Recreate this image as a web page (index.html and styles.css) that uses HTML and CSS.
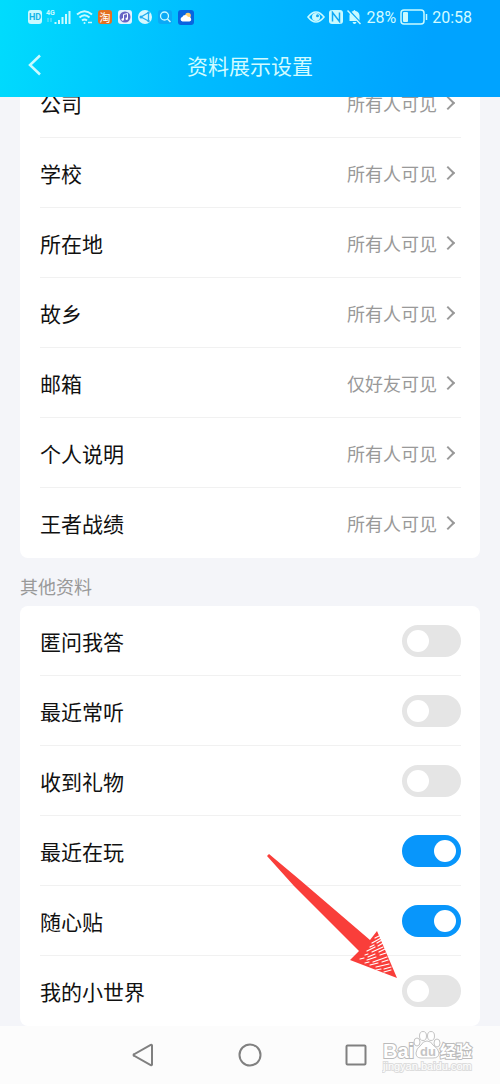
FILE: index.html
```html
<!DOCTYPE html>
<html lang="zh-CN">
<head>
    <meta charset="UTF-8">
    <meta name="viewport" content="width=device-width, initial-scale=1.0">
    <title>资料展示设置</title>
    <link rel="stylesheet" href="styles.css">
</head>
<body>
    <header class="header">
        <div class="status-bar">
            <div class="status-left">
                <span class="hd">HD</span>
                <svg class="signal" width="26" height="16" viewBox="0 0 26 16">
                    <text x="0" y="6" font-size="7" font-weight="700" fill="#c9faff">4G</text>
                    <path d="M2 9v4M5 9v4" stroke="#7fe3fb" stroke-width="1"/>
                    <path d="M9.500 13v2M13 11v4M16.500 8v7M20 5v10M23.500 2v13" stroke="#c9faff" stroke-width="2"/>
                </svg>
                <svg class="wifi" width="18" height="16" viewBox="0 0 18 16" fill="none" stroke="#c9faff" stroke-width="2">
                    <path d="M1 5.500Q8.500-1 16 5.500M3.500 8.500q5-4.500 10 0M6 11.500q2.500-2 5 0"/>
                    <circle cx="8.500" cy="14" r="1" fill="#c9faff" stroke="none"/>
                    <path d="M12 13.500h4" stroke-width="1.500"/>
                </svg>
                <span class="taobao">淘</span>
                <svg width="14" height="14" viewBox="0 0 14 14">
                    <rect width="14" height="14" rx="3" fill="#e2f2ff"/>
                    <circle cx="7" cy="7" r="5.500" fill="#6865c4"/>
                    <path d="M5.500 9.500V4.500L9.500 3.500v5" fill="none" stroke="#fff" stroke-width="1"/>
                    <circle cx="4.700" cy="9.500" r="1.200" fill="#fff"/>
                    <circle cx="8.700" cy="8.700" r="1.200" fill="#fff"/>
                </svg>
                <svg width="14" height="14" viewBox="0 0 14 14">
                    <circle cx="7" cy="7" r="7" fill="#d5f8ff"/>
                    <path d="M10.500 2.500 3 7l7.500 4z" fill="none" stroke="#22aef0" stroke-width="1.300"/>
                    <circle cx="3" cy="7" r="1.500" fill="#22aef0"/>
                    <circle cx="10.500" cy="2.800" r="1.200" fill="#22aef0"/>
                    <circle cx="10.500" cy="11" r="1.200" fill="#22aef0"/>
                </svg>
                <svg width="14" height="14" viewBox="0 0 14 14">
                    <rect width="14" height="14" rx="3" fill="#0ba9f6"/>
                    <circle cx="6.500" cy="6" r="4" fill="none" stroke="#c9faff" stroke-width="1.300"/>
                    <path d="m9.500 9 3 3" stroke="#c9faff" stroke-width="1.500"/>
                </svg>
                <svg width="16" height="15" viewBox="0 0 16 15">
                    <rect width="16" height="15" rx="3" fill="#0864e0"/>
                    <circle cx="10" cy="5.500" r="2.800" fill="#ffcf70"/>
                    <path d="M4.500 11.500a2.300 2.300 0 0 1-.2-4.500 3 3 0 0 1 5.700 0 2.300 2.300 0 0 1 1.500 4.500z" fill="#fff"/>
                </svg>
            </div>
            <div class="status-right">
                <svg width="18" height="12" viewBox="0 0 18 12">
                    <path d="M1 6q8-10 16 0-8 10-16 0z" fill="none" stroke="#c9faff" stroke-width="1.600"/>
                    <circle cx="9" cy="6" r="4" fill="#c9faff"/>
                    <circle cx="10.500" cy="4.800" r="1.500" fill="#11a9f5"/>
                </svg>
                <svg width="14" height="14" viewBox="0 0 14 14">
                    <rect width="14" height="14" rx="3" fill="#c9faff"/>
                    <path d="M3.500 11.500v-9l7 9v-9" fill="none" stroke="#11a9f5" stroke-width="1.500"/>
                </svg>
                <svg width="15" height="16" viewBox="0 0 15 16">
                    <path d="M2.500 12V6.500Q3 2.500 6.500 2q.5-2 2 0 3.500.5 4 4.500V12zM5.500 13h4q-.5 2-2 2t-2-2z" fill="#c9faff"/>
                    <path d="M1.500 1 14 14.500" stroke="#05a8fb" stroke-width="2"/>
                    <path d="M.5 1.500 13.500 15" stroke="#c9faff" stroke-width="1.500"/>
                </svg>
                <span>28%</span>
                <svg width="28" height="16" viewBox="0 0 28 16">
                    <rect x="1" y="1" width="23" height="14" rx="3" fill="none" stroke="#c9faff" stroke-width="1.500"/>
                    <rect x="3" y="3" width="5" height="10" rx="1" fill="#c9faff"/>
                    <path d="M26.500 5v6" stroke="#c9faff" stroke-width="1.500"/>
                </svg>
                <span>20:58</span>
            </div>
        </div>
        <div class="title-bar">
            <button class="back" aria-label="返回">
                <svg width="14" height="22" viewBox="0 0 14 22"><path d="M12 1.500 2 11l10 9.500" fill="none" stroke="#c9faff" stroke-width="2.500"/></svg>
            </button>
            <h1>资料展示设置</h1>
        </div>
    </header>

    <main class="settings">
        <section class="card">
            <a class="row" href="#"><span>公司</span><span class="value">所有人可见</span></a>
            <a class="row" href="#"><span>学校</span><span class="value">所有人可见</span></a>
            <a class="row" href="#"><span>所在地</span><span class="value">所有人可见</span></a>
            <a class="row" href="#"><span>故乡</span><span class="value">所有人可见</span></a>
            <a class="row" href="#"><span>邮箱</span><span class="value">仅好友可见</span></a>
            <a class="row" href="#"><span>个人说明</span><span class="value">所有人可见</span></a>
            <a class="row" href="#"><span>王者战绩</span><span class="value">所有人可见</span></a>
        </section>

        <h2>其他资料</h2>
        <section class="card">
            <div class="row">
                <label for="qa">匿问我答</label>
                <input class="switch" type="checkbox" id="qa">
            </div>
            <div class="row">
                <label for="music">最近常听</label>
                <input class="switch" type="checkbox" id="music">
            </div>
            <div class="row">
                <label for="gift">收到礼物</label>
                <input class="switch" type="checkbox" id="gift">
            </div>
            <div class="row">
                <label for="game">最近在玩</label>
                <input class="switch" type="checkbox" id="game" checked>
            </div>
            <div class="row">
                <label for="sticker">随心贴</label>
                <input class="switch" type="checkbox" id="sticker" checked>
            </div>
            <div class="row">
                <label for="world">我的小世界</label>
                <input class="switch" type="checkbox" id="world">
                <svg class="arrow" width="132" height="126" viewBox="0 0 132 126">
                    <path d="M1 3 3 1 34 27 104 87 111 78 131 125 84 107 93 98 28 33z" fill="#f93e3a"/>
                    <g fill="none" stroke="#fff" stroke-width="1.200" stroke-linecap="round">
                        <path d="m109 85 4-2M106 90l9-5M104 94l4-2m3-2 5-3M101 98l8-4m3-1 5-3M99 102l3-1m4-2 11-5"/>
                        <path d="m94 106 4-1m4-1 7-3m4-2 6-3M101 107l9-3m4-2 6-2M99 110l4-1m4 0 14-5"/>
                        <path d="m104 112 8-2m4-1 6-2M110 114l13-3M110 117l5-1m3 0 7-2M118 119l7-2"/>
                    </g>
                </svg>
            </div>
        </section>
    </main>

    <nav class="nav-bar">
        <button aria-label="返回上一页">
            <svg width="24" height="24" viewBox="0 0 24 24"><path d="M20 2.500v19a1 1 0 0 1-1.300.5L2.500 13a1 1 0 0 1 0-2L18.700 2a1 1 0 0 1 1.300.5z"/></svg>
        </button>
        <button aria-label="主屏幕">
            <svg width="24" height="24" viewBox="0 0 24 24"><circle cx="12" cy="12" r="10.500"/></svg>
        </button>
        <button aria-label="最近任务">
            <svg width="24" height="24" viewBox="0 0 24 24"><rect x="2.500" y="2.500" width="19" height="19" rx="1"/></svg>
        </button>
        <svg class="watermark" width="94" height="46" viewBox="0 0 94 46">
            <text class="mark-latin" x="1" y="29">Bai</text>
            <g fill="#fff" stroke="#c4c4c4" stroke-width="1">
                <ellipse cx="35" cy="13" rx="3" ry="4"/>
                <ellipse cx="41" cy="7" rx="3.500" ry="4.500"/>
                <ellipse cx="49" cy="7" rx="3.500" ry="4.500"/>
                <ellipse cx="55" cy="14" rx="3" ry="4"/>
                <path d="M45 12q4 0 6 4 6 4 6 8 0 5-6 5H39q-5 0-5-5 0-4 5-8 2-4 6-4z"/>
            </g>
            <text class="mark-du" x="38" y="27">du</text>
            <text class="mark-cn" x="58" y="28">经验</text>
            <text class="mark-url" x="1" y="41">jingyan.baidu.com</text>
        </svg>
    </nav>
</body>
</html>
```

FILE: styles.css
```css
* {
    box-sizing: border-box;
}
body {
    margin: 0;
    font-family: "Noto Sans CJK SC", sans-serif;
    background: #f4f5f9;
    color: #111111;
}
button {
    display: flex;
    padding: 0;
    border: none;
    background: none;
    cursor: pointer;
}
svg {
    display: block;
    flex: none;
}
h1, h2 {
    margin: 0;
    font-weight: 400;
}

/* Header */
.header {
    position: relative;
    z-index: 1;
    color: #d2fbff;
    background: linear-gradient(100deg, #00dcfd 0%, #00bcff 40%, #00a3ff 85%);
}
.status-bar {
    display: flex;
    justify-content: space-between;
    align-items: center;
    height: 34px;
    padding: 0 28px;
    font-family: Roboto, sans-serif;
    font-size: 16px;
}
.status-left {
    display: flex;
    align-items: center;
    gap: 6px;
}
.status-right {
    display: flex;
    align-items: center;
    gap: 4px;
}
.signal, .wifi {
    margin-right: -2px;
}
.hd, .taobao {
    width: 14px;
    height: 14px;
    line-height: 14px;
    text-align: center;
    border-radius: 3px;
}
.hd {
    margin-right: -2px;
    background: #c9faff;
    color: #13b5e8;
    font-size: 9px;
    font-weight: 700;
}
.taobao {
    background: #e36f20;
    color: #ffffff;
    font-family: "Noto Sans CJK SC", sans-serif;
    font-size: 11px;
}
.title-bar {
    display: grid;
    grid-template-columns: 14px 1fr 14px;
    align-items: center;
    height: 63px;
    padding: 0 28px 2px;
}
h1 {
    font-size: 21px;
    line-height: 30px;
    text-align: center;
}

/* Settings list, its first row is scrolled under the header */
.settings {
    margin-top: -29px;
    padding: 0 20px;
}
.card {
    padding: 0 19px 0 20px;
    border-radius: 8px;
    background: #ffffff;
}
.row {
    position: relative;
    display: flex;
    justify-content: space-between;
    align-items: center;
    height: 70px;
    border-bottom: 1px solid #f1f1f1;
    color: #111111;
    font-size: 21px;
    text-decoration: none;
}
.row:last-child {
    border-bottom: none;
}
.value {
    display: flex;
    align-items: center;
    gap: 6px;
    padding-right: 8px;
    color: #999999;
    font-size: 18px;
}
.value::after {
    content: "";
    width: 8px;
    height: 8px;
    border: solid #999999;
    border-width: 2px 2px 0 0;
    transform: rotate(45deg);
}
h2 {
    height: 48px;
    padding-top: 4px;
    line-height: 48px;
    color: #999999;
    font-size: 18px;
}
.switch {
    appearance: none;
    width: 59px;
    height: 32px;
    margin: 0;
    padding: 5px;
    border-radius: 16px;
    background: #e5e5e5;
    cursor: pointer;
}
.switch::before {
    content: "";
    display: block;
    width: 22px;
    height: 22px;
    border-radius: 50%;
    background: #ffffff;
}
.switch:checked {
    background: #0896fb;
}
.switch:checked::before {
    margin-left: auto;
}
.arrow {
    position: absolute;
    top: -103px;
    right: 63px;
    pointer-events: none;
}

/* System navigation */
.nav-bar {
    position: relative;
    display: flex;
    justify-content: center;
    align-items: center;
    gap: 82px;
    height: 58px;
    background: #fcfcfc;
}
.nav-bar button svg {
    fill: none;
    stroke: #808080;
    stroke-width: 2;
}
.watermark {
    position: absolute;
    top: 3px;
    right: 24px;
}
.watermark text {
    fill: #ffffff;
    stroke: #bbbbbb;
    stroke-width: 2px;
    paint-order: stroke;
}
.mark-latin {
    font: 700 20px "Liberation Sans", sans-serif;
}
.watermark .mark-du {
    font: 700 13px "Liberation Sans", sans-serif;
    fill: #c4c4c4;
    stroke: none;
}
.mark-cn {
    font: 700 16px "Noto Sans CJK SC", sans-serif;
}
.watermark .mark-url {
    font: 400 11px "Liberation Sans", sans-serif;
    stroke: #dddddd;
}
```
